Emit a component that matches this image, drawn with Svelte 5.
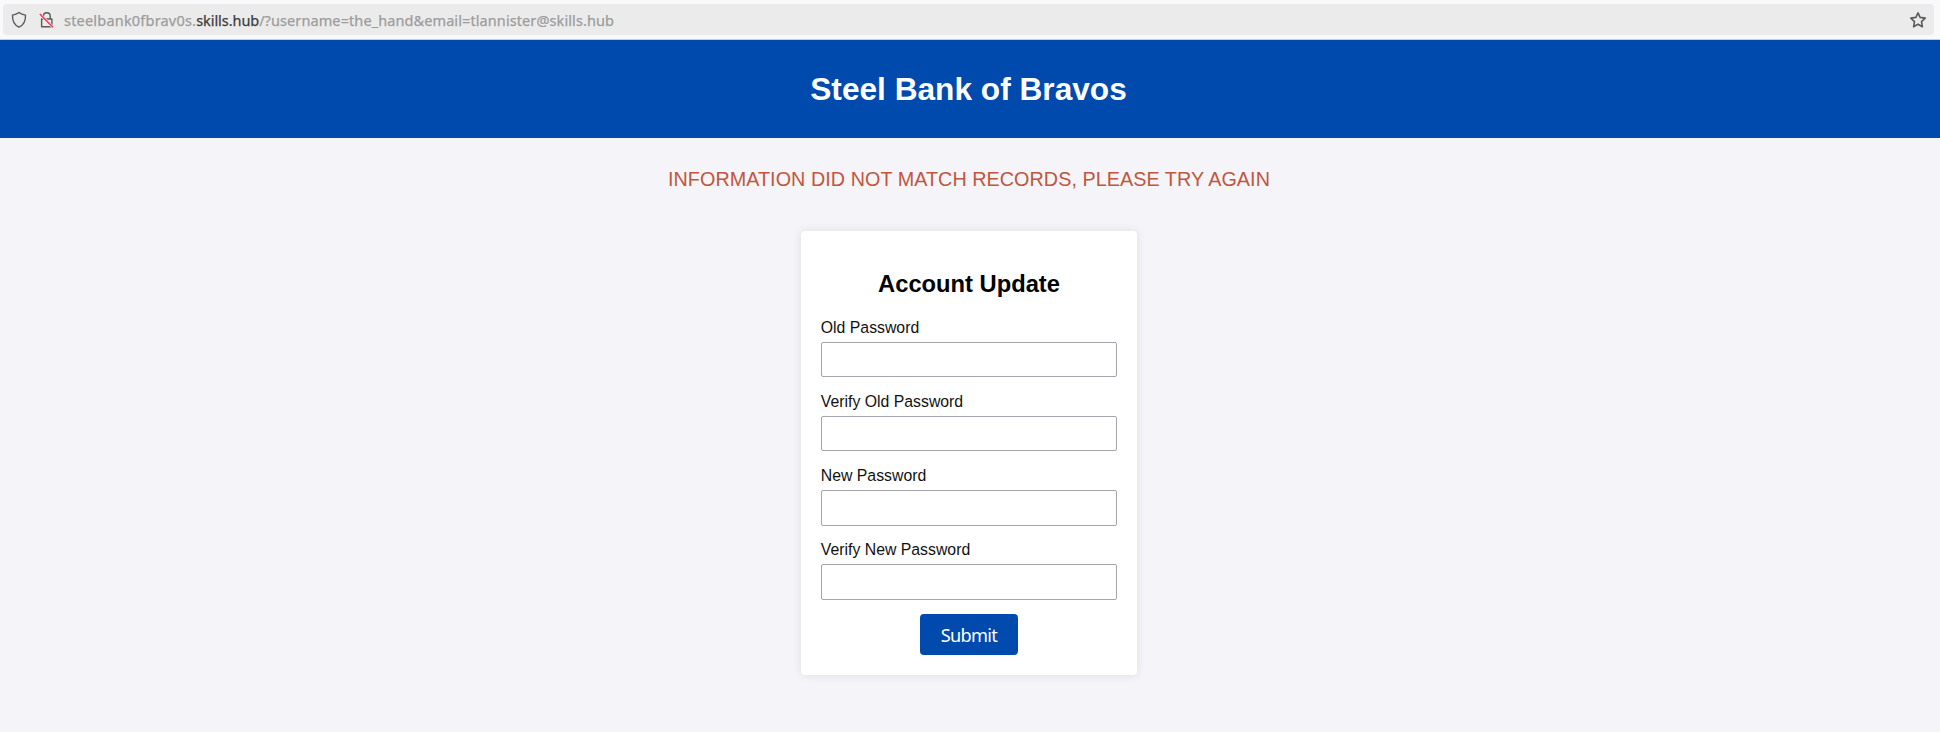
<script>
  const fields = ['Old Password', 'Verify Old Password', 'New Password', 'Verify New Password'];
</script>

<div class="browser">
  <div class="address">
    <svg class="shield" viewBox="0 0 16 18" aria-hidden="true">
      <path d="M8 1.5C6 3 3.8 3.7 1.5 4.1C1.2 9.9 3.6 14.1 8 16.2C12.4 14.1 14.8 9.9 14.5 4.1C12.2 3.7 10 3 8 1.5Z" />
    </svg>
    <svg class="lock" viewBox="0 0 16 18" aria-hidden="true">
      <path d="M4.4 8V5.2a3.4 3.4 0 0 1 6.8 0V8M2.6 8h10.3v7.7H2.6Z" />
      <path class="halo" d="M.8 3 14 16.2" />
      <path class="slash" d="M.8 3 14 16.2" />
    </svg>
    <div class="url"><span class="sub">steelbank0fbrav0s.</span><span class="host">skills.hub</span><span class="query">/?username=the_hand&amp;email=tlannister@skills.hub</span></div>
    <svg class="star" viewBox="0 0 18 18" aria-hidden="true">
      <path d="M9 1.8 11.1 6.4 16.2 7.1 12.5 10.6 13.4 15.8 9 13.3 4.6 15.8 5.5 10.6 1.8 7.1 6.9 6.4Z" />
    </svg>
  </div>
</div>

<header><h1>Steel Bank of Bravos</h1></header>

<main>
  <p class="error">INFORMATION DID NOT MATCH RECORDS, PLEASE TRY AGAIN</p>
  <form onsubmit={(e) => e.preventDefault()}>
    <h2>Account Update</h2>
    {#each fields as label, i}
      <div class="field">
        <label for="password-{i}">{label}</label>
        <input id="password-{i}" type="password" />
      </div>
    {/each}
    <button type="submit">Submit</button>
  </form>
</main>

<style>
  :global(body) {
    min-height: 732px;
    background: #f4f4f9;
    font-family: "Liberation Sans", Arial, sans-serif;
  }

  .browser {
    box-sizing: border-box;
    height: 40px;
    padding: 4px 6px 4px 3px;
    background: #f9f9fb;
    border-bottom: 1px solid #ccccd0;
  }

  .address {
    display: flex;
    align-items: center;
    height: 31px;
    padding: 0 7px 0 8px;
    border-radius: 4px;
    background: #ebebeb;
  }

  svg {
    flex: none;
    fill: none;
    stroke: #5b5b5b;
    stroke-width: 1.4;
    stroke-linejoin: round;
  }

  .shield {
    width: 16px;
    height: 18px;
  }

  .lock {
    width: 16px;
    height: 18px;
    margin-left: 12px;
  }

  .lock .halo {
    stroke: #ebebeb;
    stroke-width: 2.8;
  }

  .lock .slash {
    stroke: #f03a63;
    stroke-width: 1.6;
  }

  .star {
    width: 18px;
    height: 18px;
    margin-left: auto;
    stroke-width: 1.6;
  }

  .url {
    margin-left: 9px;
    color: #9c9c9c;
    font: 14.5px/20px "Noto Sans", sans-serif;
    white-space: nowrap;
    -webkit-text-stroke: 0.25px currentColor;
  }

  .sub {
    letter-spacing: 0.2px;
  }

  .host {
    color: #3c3c3c;
    letter-spacing: -0.06px;
  }

  .query {
    letter-spacing: 0.09px;
  }

  header {
    height: 98px;
    background: #004aad;
    color: #fff;
    text-align: center;
  }

  h1 {
    width: 1937px;
    margin: 0;
    padding-top: 31px;
    font-size: 31.65px;
    line-height: 36px;
  }

  main {
    display: flex;
    flex-direction: column;
    align-items: center;
    width: 1938px;
  }

  .error {
    margin: 30px 0 41px;
    color: #c0573c;
    font-size: 19.78px;
    line-height: 22px;
    letter-spacing: 0.045px;
  }

  form {
    box-sizing: border-box;
    display: flex;
    flex-direction: column;
    width: 336px;
    height: 444px;
    padding: 39.6px 19.8px 0;
    border-radius: 4px;
    background: #fff;
    box-shadow: 0 0 10px rgba(0, 0, 0, 0.1);
  }

  h2 {
    margin: 0 0 18px;
    font-size: 23.73px;
    line-height: 27px;
    text-align: center;
  }

  .field {
    display: flex;
    flex-direction: column;
    height: 74.2px;
  }

  label {
    box-sizing: border-box;
    height: 26px;
    padding-top: 3px;
    color: #111;
    font-size: 15.82px;
    line-height: 18px;
  }

  input {
    box-sizing: border-box;
    width: 100%;
    height: 35.6px;
    margin: 0;
    border: 1px solid #a5a4ae;
    border-radius: 2px;
    background: #fff;
  }

  button {
    align-self: center;
    width: 98px;
    height: 41px;
    margin-top: 1.8px;
    padding: 0;
    border: 0;
    border-radius: 4px;
    background: #004aad;
    color: #fff;
    font: 18.2px/20px "Noto Sans", sans-serif;
    letter-spacing: -0.7px;
  }
</style>
